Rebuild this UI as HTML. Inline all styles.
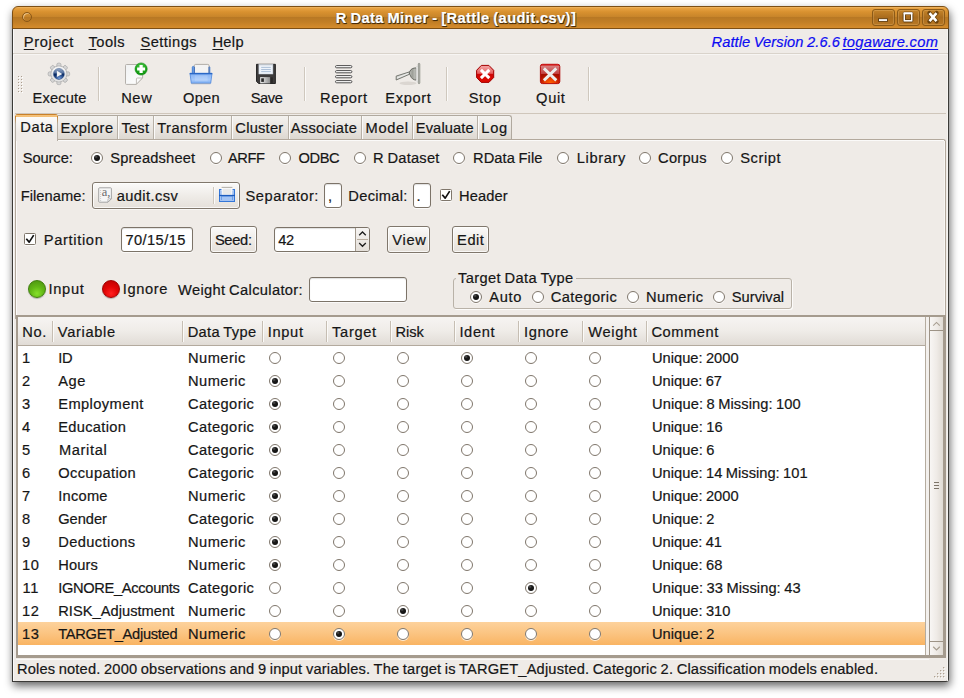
<!DOCTYPE html>
<html>
<head>
<meta charset="utf-8">
<title>R Data Miner - [Rattle (audit.csv)]</title>
<style>
html,body{margin:0;padding:0;background:#fff;}
body{width:964px;height:698px;position:relative;overflow:hidden;font-family:"Liberation Sans",sans-serif;font-size:14.67px;color:#161616;}
div,span,i,b{box-sizing:border-box;}
.a{position:absolute;}
.t{position:absolute;white-space:pre;word-spacing:-0.7px;line-height:20px;height:20px;-webkit-text-stroke:0.2px currentColor;}
.t u{text-decoration:underline;text-underline-offset:2px;text-decoration-thickness:1px;}
/* radio */
i.r{position:absolute;width:12px;height:12px;border-radius:50%;border:1px solid #7f766b;background:#fff;box-shadow:0 1px 0 rgba(255,255,255,.7);}
i.r.on::after{content:"";position:absolute;left:2px;top:2px;width:6px;height:6px;border-radius:50%;background:radial-gradient(circle at 35% 30%,#5a5a5a 0,#1a1a1a 30%,#0c0c0c 100%);}
/* generic gtk button */
.btn{position:absolute;border:1px solid #80776c;border-radius:3px;background:linear-gradient(#fbfaf9 0%,#efece8 50%,#e5e0da 100%);box-shadow:inset 0 0 0 1px rgba(255,255,255,.75),0 1px 0 rgba(255,255,255,.6);}
.entry{position:absolute;border:1px solid #7c7368;border-radius:3px;background:#fff;box-shadow:inset 0 1px 1px rgba(0,0,0,.13),0 1px 0 rgba(255,255,255,.7);}
.vsep{position:absolute;width:1px;background:#cfc8be;box-shadow:1px 0 0 #fbfaf9;}
.chk{position:absolute;width:12px;height:12px;border:1px solid #7f766b;background:#fff;border-radius:1.5px;box-shadow:0 1px 0 rgba(255,255,255,.7);}
.hsep{position:absolute;width:1px;top:321px;height:21px;background:#c6beb3;box-shadow:1px 0 0 #fbfaf8;}
</style>
</head>
<body>
<!-- window shadow + frame -->
<div class="a" id="win" style="left:12px;top:6px;width:937px;height:676px;background:#efebe7;border-radius:6px 6px 3px 1px;box-shadow:1px 4px 9px 0px rgba(0,0,0,.6);"></div>
<div class="a" style="left:12px;top:28px;width:937px;height:654px;border:1px solid #3b3a37;border-top:none;border-radius:0 0 3px 0;"></div>
<div class="a" style="left:13px;top:29px;width:1px;height:652px;background:#fbfaf9;"></div>
<div class="a" style="left:947px;top:29px;width:1px;height:652px;background:#f6f4f1;"></div>
<!-- titlebar -->
<div class="a" id="title" style="left:12px;top:6px;width:937px;height:23px;border:1px solid #7d4f14;border-radius:6px 6px 0 0;background:linear-gradient(#f0b866 0px,#e6a040 1.5px,#d8912f 5px,#c7842a 10px,#b87824 10.5px,#c17e25 15px,#d58c2c 21px);"></div>
<div class="a" style="left:22px;top:12px;width:10px;height:10px;border-radius:50%;border:1px solid #8a5716;box-shadow:inset 1px 1px 0 rgba(255,230,190,.6);"></div>
<!-- title buttons -->
<div class="a tb" style="left:872px;top:9px;width:23px;height:17px;border:1px solid #8c5a17;border-radius:3px;background:linear-gradient(#c58429,#a96c1e 50%,#b87824);box-shadow:inset 0 0 0 1px rgba(255,220,160,.22);"></div>
<div class="a tb" style="left:897px;top:9px;width:23px;height:17px;border:1px solid #8c5a17;border-radius:3px;background:linear-gradient(#c58429,#a96c1e 50%,#b87824);box-shadow:inset 0 0 0 1px rgba(255,220,160,.22);"></div>
<div class="a tb" style="left:922px;top:9px;width:23px;height:17px;border:1px solid #8c5a17;border-radius:3px;background:linear-gradient(#c58429,#a96c1e 50%,#b87824);box-shadow:inset 0 0 0 1px rgba(255,220,160,.22);"></div>
<svg class="a" style="left:872px;top:9px" width="73" height="17" viewBox="0 0 73 17">
 <rect x="6.5" y="9.7" width="9" height="2.7" fill="#fff" stroke="#5e3a0a" stroke-width=".9"/>
 <rect x="32.3" y="4.4" width="7.4" height="7.4" fill="none" stroke="#5e3a0a" stroke-width="3.2" stroke-linejoin="round"/>
 <rect x="32.3" y="4.4" width="7.4" height="7.4" fill="none" stroke="#fff" stroke-width="1.5"/>
 <path d="M31.6 4.3 H40.4" stroke="#fff" stroke-width="2"/>
 <path d="M57.4 4.1 L64.6 12.3 M64.6 4.1 L57.4 12.3" stroke="#5e3a0a" stroke-width="4.2" stroke-linecap="round" opacity=".85"/>
 <path d="M57.5 4.2 L64.5 12.2 M64.5 4.2 L57.5 12.2" stroke="#fff" stroke-width="2.6" stroke-linecap="butt"/>
</svg>
<!-- menubar bottom line -->
<div class="a" style="left:13px;top:53px;width:935px;height:1px;background:#d9d3cb;"></div>
<div class="a" style="left:13px;top:54px;width:935px;height:1px;background:#f7f5f3;"></div>
<!-- toolbar -->
<div class="a" style="left:15px;top:113px;width:931px;height:1px;background:#cfc6bb;"></div>
<svg class="a" style="left:17px;top:75px" width="7" height="19" viewBox="0 0 7 19"><g fill="#fff"><rect x="2" y="2" width="1" height="1"/><rect x="5" y="2" width="1" height="1"/><rect x="2" y="5" width="1" height="1"/><rect x="5" y="5" width="1" height="1"/><rect x="2" y="8" width="1" height="1"/><rect x="5" y="8" width="1" height="1"/><rect x="2" y="11" width="1" height="1"/><rect x="5" y="11" width="1" height="1"/><rect x="2" y="14" width="1" height="1"/><rect x="5" y="14" width="1" height="1"/><rect x="2" y="17" width="1" height="1"/><rect x="5" y="17" width="1" height="1"/></g><g fill="#ab9d8e"><rect x="1" y="1" width="1" height="1"/><rect x="4" y="1" width="1" height="1"/><rect x="1" y="4" width="1" height="1"/><rect x="4" y="4" width="1" height="1"/><rect x="1" y="7" width="1" height="1"/><rect x="4" y="7" width="1" height="1"/><rect x="1" y="10" width="1" height="1"/><rect x="4" y="10" width="1" height="1"/><rect x="1" y="13" width="1" height="1"/><rect x="4" y="13" width="1" height="1"/><rect x="1" y="16" width="1" height="1"/><rect x="4" y="16" width="1" height="1"/></g></svg>
<div class="vsep" style="left:98px;top:67px;height:34px;"></div>
<div class="vsep" style="left:304px;top:67px;height:34px;"></div>
<div class="vsep" style="left:446px;top:67px;height:34px;"></div>
<div class="vsep" style="left:588px;top:67px;height:34px;"></div>
<svg class="a" style="left:0;top:0" width="964" height="698" viewBox="0 0 964 698">
<defs>
 <linearGradient id="gBlue" x1="0" y1="0" x2="0" y2="1"><stop offset="0" stop-color="#93a6c3"/><stop offset=".42" stop-color="#53709f"/><stop offset=".5" stop-color="#0a2a63"/><stop offset="1" stop-color="#0f3577"/></linearGradient>
 <radialGradient id="gBlueGlow" cx=".55" cy=".95" r=".5"><stop offset="0" stop-color="#8db8f5" stop-opacity=".8"/><stop offset="1" stop-color="#8db8f5" stop-opacity="0"/></radialGradient>
 <linearGradient id="gPage" x1="0" y1="0" x2="1" y2="1"><stop offset="0" stop-color="#f0f1f2"/><stop offset="1" stop-color="#ffffff"/></linearGradient>
 <radialGradient id="gGreen" cx=".5" cy=".3" r=".75"><stop offset="0" stop-color="#4fc94a"/><stop offset=".6" stop-color="#1aa51a"/><stop offset="1" stop-color="#0a8a0c"/></radialGradient>
 <linearGradient id="gFold" x1="0" y1="0" x2="0" y2="1"><stop offset="0" stop-color="#5d97ea"/><stop offset=".12" stop-color="#8ab6f5"/><stop offset=".65" stop-color="#a6c9fb"/><stop offset="1" stop-color="#78abf1"/></linearGradient>
 <linearGradient id="gShut" x1="0" y1="0" x2="1" y2="0"><stop offset="0" stop-color="#f0f0f0"/><stop offset="1" stop-color="#8e8e8e"/></linearGradient>
 <linearGradient id="gStop" x1="0" y1="0" x2="0" y2="1"><stop offset="0" stop-color="#f29a9a"/><stop offset=".48" stop-color="#e23a3a"/><stop offset=".52" stop-color="#cf0606"/><stop offset="1" stop-color="#e00b00"/></linearGradient>
 <linearGradient id="gQuit" x1="0" y1="0" x2="0" y2="1"><stop offset="0" stop-color="#dc8f8f"/><stop offset=".48" stop-color="#c24040"/><stop offset=".52" stop-color="#a50e00"/><stop offset="1" stop-color="#b81200"/></linearGradient>
 <radialGradient id="gQuitGlow" cx=".5" cy=".95" r=".62" gradientTransform="translate(.5 .95) scale(1 1.5) translate(-.5 -.95)"><stop offset="0" stop-color="#ff6200"/><stop offset=".45" stop-color="#f24800" stop-opacity=".85"/><stop offset="1" stop-color="#e03000" stop-opacity="0"/></radialGradient>
 <linearGradient id="gCone" x1="0" y1="0" x2="1" y2="0"><stop offset="0" stop-color="#c4c5c0"/><stop offset=".45" stop-color="#9c9e97"/><stop offset="1" stop-color="#c9cac5"/></linearGradient>
</defs>
<!-- Execute: gear -->
<g transform="translate(58.9 73.9)">
 <g fill="#d6d6d6" stroke="#b2b2b2" stroke-width=".9">
  <rect x="-2" y="-10.7" width="4" height="6" rx="1.3"/>
  <rect x="-2" y="-10.7" width="4" height="6" rx="1.3" transform="rotate(45)"/>
  <rect x="-2" y="-10.7" width="4" height="6" rx="1.3" transform="rotate(90)"/>
  <rect x="-2" y="-10.7" width="4" height="6" rx="1.3" transform="rotate(135)"/>
  <rect x="-2" y="-10.7" width="4" height="6" rx="1.3" transform="rotate(180)"/>
  <rect x="-2" y="-10.7" width="4" height="6" rx="1.3" transform="rotate(225)"/>
  <rect x="-2" y="-10.7" width="4" height="6" rx="1.3" transform="rotate(270)"/>
  <rect x="-2" y="-10.7" width="4" height="6" rx="1.3" transform="rotate(315)"/>
  <circle r="8"/>
 </g>
 <circle r="7.5" fill="#e4e4e4"/>
 <path d="M-6.8 -2 A7.1 7.1 0 0 1 6.8 -2 L5 1 L-5 1Z" fill="#f3f3f3"/>
 <circle r="5.5" fill="url(#gBlue)" stroke="#3d5a8c" stroke-width=".5"/>
 <circle r="5.2" fill="url(#gBlueGlow)"/>
 <path d="M-2 -3.2 L3.4 0 L-2 3.2Z" fill="#f4f4f4"/>
</g>
<!-- New -->
<g>
 <path d="M126.5 64.5 H141.6 Q142.6 64.5 142.6 65.5 V78 L136.2 84.4 H126.5 Q125.5 84.4 125.5 83.4 V65.5 Q125.5 64.5 126.5 64.5Z" fill="url(#gPage)" stroke="#b4b0ab" stroke-width="1"/>
 <path d="M136.4 84.2 V79 Q136.4 78 137.4 78 H142.4Z" fill="#fbfbfb" stroke="#b9b5b0" stroke-width=".9"/>
 <circle cx="141.1" cy="69" r="6.1" fill="url(#gGreen)" stroke="#0b8a0e" stroke-width=".6"/>
 <path d="M141.1 65 V73 M137.1 69 H145.1" stroke="#fff" stroke-width="3.2"/>
</g>
<!-- Open -->
<g>
 <rect x="192.3" y="66.4" width="17.5" height="8" rx="1" fill="#6a9fe9" stroke="#3a79d2" stroke-width=".9"/>
 <rect x="194.4" y="64.4" width="14.6" height="10" rx="1.2" fill="#f3f3f3" stroke="#aaa59e" stroke-width=".9"/>
 <path d="M194.4 67 V73 M209 67 V73" stroke="#3468bd" stroke-width=".9"/>
 <path d="M190 73.4 H212 L210.7 83.3 H191.3Z" fill="url(#gFold)" stroke="#4b87de" stroke-width=".8"/>
 <rect x="194.8" y="75.4" width="12.8" height="5.8" fill="#fff" opacity=".16"/>
 <path d="M189.7 73.6 H212.3" stroke="#2a68c6" stroke-width="1.4"/>
 <path d="M191.6 83.8 H210.4" stroke="#9fa6b2" stroke-width=".9" opacity=".7"/>
</g>
<!-- Save -->
<g>
 <path d="M256.5 64.3 H275.4 V83.5 H258.6 L256.5 81.4Z" fill="#3d3b3b" stroke="#1c1c1c" stroke-width=".9"/>
 <rect x="258.9" y="64.4" width="14" height="9.6" fill="#eef3fa" stroke="#c9d3df" stroke-width=".5"/>
 <path d="M258.9 64.8 H272.9" stroke="#bfc3c8" stroke-width=".9"/>
 <path d="M261.2 67.4 H270.8 M261.2 69.5 H270.8 M261.2 71.6 H270.8" stroke="#a5bad4" stroke-width=".9"/>
 <rect x="260.2" y="77.1" width="9.9" height="6.3" fill="url(#gShut)"/>
 <rect x="261.2" y="78.3" width="2.7" height="3.6" fill="#2c2c2c"/>
 <rect x="270.6" y="77.4" width="2.2" height="5.5" fill="#2a2828"/>
</g>
<!-- Report -->
<g fill="#fff" stroke="#4e4e4e" stroke-width="1">
 <rect x="335.5" y="65.6" width="16.4" height="2.2" rx="1.1"/>
 <rect x="335.5" y="70.6" width="16.4" height="2.2" rx="1.1"/>
 <rect x="335.5" y="75.6" width="16.4" height="2.2" rx="1.1"/>
 <rect x="335.5" y="80.6" width="16.4" height="2.2" rx="1.1"/>
</g>
<!-- Export (plug) -->
<g>
 <ellipse cx="408" cy="83.2" rx="8.5" ry="1.7" fill="#aaa39a" opacity=".28"/>
 <path d="M409.4 71.9 L396.2 76.1 V80 L409.8 74.1Z" fill="#d3d4d0" stroke="#6b6d67" stroke-width=".9"/>
 <path d="M397 78 L409 73.1" stroke="#f1f1ef" stroke-width=".9"/>
 <path d="M416.3 67.9 C413 67.9 410.8 69 410 71.2 C409.8 71.8 409.5 72 409 72 L409.5 74.1 C410 74.2 410.2 74.8 410.5 75.8 C411.3 78.4 413.4 80 416.3 80.1Z" fill="url(#gCone)" stroke="#5a5c57" stroke-width=".9"/>
 <rect x="416.3" y="66.2" width="1.8" height="15.6" fill="#f6f6f4" stroke="#d4d5d1" stroke-width=".4"/>
 <rect x="418.3" y="63.3" width="1.5" height="20.4" rx=".7" fill="#c9cac5" stroke="#84867f" stroke-width=".8"/>
</g>
<!-- Stop -->
<g>
 <path d="M481.3 65.4 H488.9 L493.7 70.3 V77.5 L488.9 82.4 H481.3 L476.6 77.5 V70.3Z" fill="url(#gStop)" stroke="#a30000" stroke-width="1" stroke-linejoin="round"/>
 <path d="M481.5 66.2 H488.6 L492.9 70.5 V73.6 H477.3 V70.5Z" fill="#fff" opacity=".18"/>
 <path d="M480.9 69.9 L489.3 78.1 M489.3 69.9 L480.9 78.1" stroke="#fff" stroke-width="3"/>
</g>
<!-- Quit -->
<g>
 <rect x="540.4" y="64.3" width="19.4" height="19.3" rx="2.2" fill="url(#gQuit)" stroke="#b30808" stroke-width="1"/>
 <rect x="541" y="73.8" width="18.2" height="9.3" fill="url(#gQuitGlow)"/>
 <path d="M540.9 65 H559.3" stroke="#d61212" stroke-width="1.1"/>
 <path d="M543.9 68.4 L556.3 80.4 M556.3 68.4 L543.9 80.4" stroke="#ececec" stroke-width="2.9"/>
</g>
</svg>

<!-- notebook -->
<div class="a" style="left:15px;top:139px;width:931px;height:180px;border:1px solid #b3a99d;border-bottom:none;border-radius:0 3px 0 0;"></div>
<div class="a" style="left:16px;top:140px;width:928px;height:1px;background:#fbfaf9;"></div>
<div class="a" style="left:944px;top:141px;width:1px;height:174px;background:#f7f5f3;"></div>
<div class="a" style="left:16px;top:140px;width:1px;height:175px;background:#fbfaf9;"></div>
<!-- inactive tabs -->
<div class="a" id="tabs" style="left:57px;top:115px;width:455px;height:24px;border:1px solid #b0a99f;border-bottom:none;border-radius:0 3px 0 0;background:linear-gradient(#f4f2ef,#e9e5e0 55%,#ddd8d1);"></div>
<div class="vsep" style="left:117px;top:116px;height:23px;background:#b7b0a6;"></div>
<div class="vsep" style="left:153px;top:116px;height:23px;background:#b7b0a6;"></div>
<div class="vsep" style="left:231px;top:116px;height:23px;background:#b7b0a6;"></div>
<div class="vsep" style="left:288px;top:116px;height:23px;background:#b7b0a6;"></div>
<div class="vsep" style="left:361px;top:116px;height:23px;background:#b7b0a6;"></div>
<div class="vsep" style="left:412px;top:116px;height:23px;background:#b7b0a6;"></div>
<div class="vsep" style="left:477px;top:116px;height:23px;background:#b7b0a6;"></div>
<!-- active tab -->
<div class="a" style="left:15px;top:114px;width:43px;height:27px;border:1px solid #b5aea4;border-bottom:none;border-radius:3px 3px 0 0;background:linear-gradient(#fbfaf9 3px,#efebe7 18px);"></div>
<div class="a" style="left:15px;top:114px;width:43px;height:3px;border-radius:3px 3px 0 0;background:linear-gradient(#c8802a 0,#c8802a 1px,#f6c47e 1px,#f3bd73 3px);"></div>
<div class="a" style="left:15px;top:116px;width:1px;height:8px;background:linear-gradient(#c8802a,#b5aea4);"></div>
<div class="a" style="left:57px;top:116px;width:1px;height:8px;background:linear-gradient(#c8802a,#b5aea4);"></div>
<!-- filename button -->
<div class="btn" style="left:92px;top:182px;width:148px;height:27px;"></div>
<div class="vsep" style="left:213px;top:187px;height:17px;"></div>
<svg class="a" style="left:92px;top:182px" width="148" height="27" viewBox="92 182 148 27">
 <path d="M99.5 187.8 H110.6 Q111.4 187.8 111.4 188.6 V198.8 L108 202.2 H99.5 Q98.7 202.2 98.7 201.4 V188.6 Q98.7 187.8 99.5 187.8Z" fill="#f6f6f6" stroke="#9c9c9c" stroke-width=".9"/>
 <path d="M108 202 V199.6 Q108 198.8 108.8 198.8 H111.2Z" fill="#fff" stroke="#9c9c9c" stroke-width=".7"/>
 <path d="M100.6 190 v.9 M100.6 192 v.9 M100.6 194 v.9 M100.6 196 v.9 M100.6 198 v.9 M100.6 200 v.9" stroke="#c2c2c2" stroke-width=".9"/>
 <text x="101.7" y="196.3" font-family="Liberation Serif, serif" font-size="12.5" fill="#6a6a6a">a,</text>
 <!-- small open icon -->
 <rect x="219.5" y="189.5" width="15" height="12" fill="#6d9fe8" stroke="#3577d8" stroke-width="1"/>
 <rect x="220.5" y="190.5" width="13" height="10" fill="none" stroke="#a9c6f3" stroke-width=".9"/>
 <rect x="222.1" y="188.1" width="9.8" height="7" fill="#e9e9e9" stroke="#fdfdfd" stroke-width="1.2"/>
 <path d="M221.6 187.4 H232.4" stroke="#aaa69f" stroke-width=".9"/>
 <path d="M219 195.5 H235" stroke="#1c5bbd" stroke-width="1.3"/>
 <rect x="222" y="196.8" width="10" height="3.2" fill="#a4c4f4"/>
</svg>

<div class="entry" style="left:324px;top:183px;width:18px;height:25px;"></div>
<div class="entry" style="left:413px;top:183px;width:18px;height:25px;"></div>
<div class="chk" style="left:440px;top:189px;"></div>
<svg class="a" style="left:440px;top:189px" width="12" height="12" viewBox="0 0 12 12"><path d="M2.3 5.7 L5.2 9.1 L9.7 2.1" fill="none" stroke="#111" stroke-width="1.7" stroke-linejoin="round"/></svg>
<!-- partition row -->
<div class="chk" style="left:24px;top:233px;"></div>
<svg class="a" style="left:24px;top:233px" width="12" height="12" viewBox="0 0 12 12"><path d="M2.3 5.7 L5.2 9.1 L9.7 2.1" fill="none" stroke="#111" stroke-width="1.7" stroke-linejoin="round"/></svg>
<div class="entry" style="left:121px;top:227px;width:72px;height:25px;"></div>
<div class="btn" style="left:210px;top:226px;width:47px;height:27px;"></div>
<div class="entry" style="left:274px;top:227px;width:96px;height:25px;"></div>
<div class="a" style="left:355px;top:228px;width:14px;height:23px;border-left:1px solid #a39a8e;background:linear-gradient(#f6f4f2,#e4dfd9);border-radius:0 2px 2px 0;"></div>
<div class="a" style="left:357px;top:239px;width:11px;height:1px;background:#b9ad9f;"></div>
<svg class="a" style="left:356px;top:228px" width="13" height="23" viewBox="0 0 13 23"><path d="M3.2 7.3 L6.5 4 L9.8 7.3" fill="none" stroke="#1c1c1c" stroke-width="1.3"/><path d="M3.2 15 L6.5 18.3 L9.8 15" fill="none" stroke="#1c1c1c" stroke-width="1.3"/></svg>
<div class="btn" style="left:387px;top:226px;width:43px;height:27px;"></div>
<div class="btn" style="left:452px;top:226px;width:37px;height:27px;"></div>
<!-- input/ignore row -->
<div class="a" style="left:28px;top:280px;width:18px;height:18px;border-radius:50%;border:1px solid #3f7f0c;background:radial-gradient(circle at 50% 78%,#86e02a 0,#62b716 45%,#4a9010 100%);box-shadow:0 1px 1px rgba(0,0,0,.25);"></div>
<div class="a" style="left:102px;top:280px;width:18px;height:18px;border-radius:50%;border:1px solid #a00000;background:radial-gradient(circle at 50% 78%,#ff2222 0,#e20505 45%,#b80000 100%);box-shadow:0 1px 1px rgba(0,0,0,.25);"></div>
<div class="entry" style="left:309px;top:277px;width:98px;height:25px;"></div>
<div class="a" style="left:453px;top:278px;width:339px;height:31px;border:1px solid #b9b2a8;border-radius:3px;box-shadow:inset 1px 1px 0 rgba(255,255,255,.0),1px 1px 0 rgba(255,255,255,.8);"></div>
<!-- table -->
<div class="a" style="left:16px;top:315px;width:930px;height:343px;background:#a59b8e;"></div>
<div class="a" style="left:16px;top:659px;width:913px;height:1px;background:#faf9f8;"></div>
<div class="a" style="left:18px;top:317px;width:907px;height:338px;background:#fff;"></div>
<div class="a" style="left:18px;top:317px;width:907px;height:29px;background:linear-gradient(#f6f4f2,#efece8 50%,#e1dcd6);border-bottom:1px solid #b3aa9e;"></div>
<div class="hsep" style="left:52px;"></div>
<div class="hsep" style="left:182px;"></div>
<div class="hsep" style="left:262px;"></div>
<div class="hsep" style="left:326px;"></div>
<div class="hsep" style="left:390px;"></div>
<div class="hsep" style="left:454px;"></div>
<div class="hsep" style="left:518px;"></div>
<div class="hsep" style="left:582px;"></div>
<div class="hsep" style="left:646px;"></div>
<!-- selected row -->
<div class="a" style="left:18px;top:622px;width:907px;height:23px;background:linear-gradient(#fdd29c,#fbc481 50%,#f9b463);"></div>
<!-- scrollbar -->
<div class="a" style="left:925px;top:317px;width:18px;height:338px;background:#f3f0ed;border-left:1px solid #b5ac9f;"></div>
<div class="a" style="left:929px;top:317px;width:14px;height:338px;border-left:1px solid #9d9386;background:linear-gradient(90deg,#f8f6f4,#efebe7 50%,#e0dbd4);"></div>
<div class="a" style="left:930px;top:330px;width:13px;height:1px;background:#9d9386;"></div>
<div class="a" style="left:930px;top:641px;width:13px;height:1px;background:#9d9386;"></div>
<svg class="a" style="left:930px;top:317px" width="13" height="338" viewBox="0 0 13 338">
 <path d="M3.2 8.6 L6.5 5.4 L9.8 8.6" fill="none" stroke="#a89e91" stroke-width="1.1"/>
 <path d="M3.2 329.8 L6.5 333 L9.8 329.8" fill="none" stroke="#a89e91" stroke-width="1.2"/>
 <path d="M4 165.5h5M4 168.5h5M4 171.5h5" stroke="#7d7468" stroke-width="1"/>
</svg>
<!-- resize grip -->
<svg class="a" style="left:933px;top:666px" width="13" height="13" viewBox="0 0 13 13"><g fill="#fff"><rect x="11" y="2" width="1.2" height="1.2"/><rect x="8" y="5" width="1.2" height="1.2"/><rect x="11" y="5" width="1.2" height="1.2"/><rect x="5" y="8" width="1.2" height="1.2"/><rect x="8" y="8" width="1.2" height="1.2"/><rect x="11" y="8" width="1.2" height="1.2"/><rect x="2" y="11" width="1.2" height="1.2"/><rect x="5" y="11" width="1.2" height="1.2"/><rect x="8" y="11" width="1.2" height="1.2"/><rect x="11" y="11" width="1.2" height="1.2"/></g><g fill="#b0a292"><rect x="10" y="1" width="1.3" height="1.3"/><rect x="7" y="4" width="1.3" height="1.3"/><rect x="10" y="4" width="1.3" height="1.3"/><rect x="4" y="7" width="1.3" height="1.3"/><rect x="7" y="7" width="1.3" height="1.3"/><rect x="10" y="7" width="1.3" height="1.3"/><rect x="1" y="10" width="1.3" height="1.3"/><rect x="4" y="10" width="1.3" height="1.3"/><rect x="7" y="10" width="1.3" height="1.3"/><rect x="10" y="10" width="1.3" height="1.3"/></g></svg>
<i class="r on" style="left:91.0px;top:152.0px"></i>
<i class="r" style="left:210.0px;top:152.0px"></i>
<i class="r" style="left:279.0px;top:152.0px"></i>
<i class="r" style="left:354.0px;top:152.0px"></i>
<i class="r" style="left:453.3px;top:152.0px"></i>
<i class="r" style="left:556.8px;top:152.0px"></i>
<i class="r" style="left:638.6px;top:152.0px"></i>
<i class="r" style="left:720.6px;top:152.0px"></i>
<i class="r on" style="left:469.5px;top:291.0px"></i>
<i class="r" style="left:531.8px;top:291.0px"></i>
<i class="r" style="left:627.0px;top:291.0px"></i>
<i class="r" style="left:713.0px;top:291.0px"></i>
<i class="r" style="left:268.6px;top:351.5px"></i>
<i class="r" style="left:332.6px;top:351.5px"></i>
<i class="r" style="left:396.6px;top:351.5px"></i>
<i class="r on" style="left:460.6px;top:351.5px"></i>
<i class="r" style="left:524.6px;top:351.5px"></i>
<i class="r" style="left:588.6px;top:351.5px"></i>
<i class="r on" style="left:268.6px;top:374.5px"></i>
<i class="r" style="left:332.6px;top:374.5px"></i>
<i class="r" style="left:396.6px;top:374.5px"></i>
<i class="r" style="left:460.6px;top:374.5px"></i>
<i class="r" style="left:524.6px;top:374.5px"></i>
<i class="r" style="left:588.6px;top:374.5px"></i>
<i class="r on" style="left:268.6px;top:397.5px"></i>
<i class="r" style="left:332.6px;top:397.5px"></i>
<i class="r" style="left:396.6px;top:397.5px"></i>
<i class="r" style="left:460.6px;top:397.5px"></i>
<i class="r" style="left:524.6px;top:397.5px"></i>
<i class="r" style="left:588.6px;top:397.5px"></i>
<i class="r on" style="left:268.6px;top:420.5px"></i>
<i class="r" style="left:332.6px;top:420.5px"></i>
<i class="r" style="left:396.6px;top:420.5px"></i>
<i class="r" style="left:460.6px;top:420.5px"></i>
<i class="r" style="left:524.6px;top:420.5px"></i>
<i class="r" style="left:588.6px;top:420.5px"></i>
<i class="r on" style="left:268.6px;top:443.5px"></i>
<i class="r" style="left:332.6px;top:443.5px"></i>
<i class="r" style="left:396.6px;top:443.5px"></i>
<i class="r" style="left:460.6px;top:443.5px"></i>
<i class="r" style="left:524.6px;top:443.5px"></i>
<i class="r" style="left:588.6px;top:443.5px"></i>
<i class="r on" style="left:268.6px;top:466.5px"></i>
<i class="r" style="left:332.6px;top:466.5px"></i>
<i class="r" style="left:396.6px;top:466.5px"></i>
<i class="r" style="left:460.6px;top:466.5px"></i>
<i class="r" style="left:524.6px;top:466.5px"></i>
<i class="r" style="left:588.6px;top:466.5px"></i>
<i class="r on" style="left:268.6px;top:489.5px"></i>
<i class="r" style="left:332.6px;top:489.5px"></i>
<i class="r" style="left:396.6px;top:489.5px"></i>
<i class="r" style="left:460.6px;top:489.5px"></i>
<i class="r" style="left:524.6px;top:489.5px"></i>
<i class="r" style="left:588.6px;top:489.5px"></i>
<i class="r on" style="left:268.6px;top:512.5px"></i>
<i class="r" style="left:332.6px;top:512.5px"></i>
<i class="r" style="left:396.6px;top:512.5px"></i>
<i class="r" style="left:460.6px;top:512.5px"></i>
<i class="r" style="left:524.6px;top:512.5px"></i>
<i class="r" style="left:588.6px;top:512.5px"></i>
<i class="r on" style="left:268.6px;top:535.5px"></i>
<i class="r" style="left:332.6px;top:535.5px"></i>
<i class="r" style="left:396.6px;top:535.5px"></i>
<i class="r" style="left:460.6px;top:535.5px"></i>
<i class="r" style="left:524.6px;top:535.5px"></i>
<i class="r" style="left:588.6px;top:535.5px"></i>
<i class="r on" style="left:268.6px;top:558.5px"></i>
<i class="r" style="left:332.6px;top:558.5px"></i>
<i class="r" style="left:396.6px;top:558.5px"></i>
<i class="r" style="left:460.6px;top:558.5px"></i>
<i class="r" style="left:524.6px;top:558.5px"></i>
<i class="r" style="left:588.6px;top:558.5px"></i>
<i class="r" style="left:268.6px;top:581.5px"></i>
<i class="r" style="left:332.6px;top:581.5px"></i>
<i class="r" style="left:396.6px;top:581.5px"></i>
<i class="r" style="left:460.6px;top:581.5px"></i>
<i class="r on" style="left:524.6px;top:581.5px"></i>
<i class="r" style="left:588.6px;top:581.5px"></i>
<i class="r" style="left:268.6px;top:604.5px"></i>
<i class="r" style="left:332.6px;top:604.5px"></i>
<i class="r on" style="left:396.6px;top:604.5px"></i>
<i class="r" style="left:460.6px;top:604.5px"></i>
<i class="r" style="left:524.6px;top:604.5px"></i>
<i class="r" style="left:588.6px;top:604.5px"></i>
<i class="r" style="left:268.6px;top:627.5px"></i>
<i class="r on" style="left:332.6px;top:627.5px"></i>
<i class="r" style="left:396.6px;top:627.5px"></i>
<i class="r" style="left:460.6px;top:627.5px"></i>
<i class="r" style="left:524.6px;top:627.5px"></i>
<i class="r" style="left:588.6px;top:627.5px"></i>
<span class="t" style="left:335.70px;top:7.80px;letter-spacing:0.386px;font-weight:bold;color:#fff;text-shadow:1px 1px 0 #4a2c08,0 1px 1px #4a2c08">R Data Miner - [Rattle (audit.csv)]</span>
<span class="t" style="left:23.79px;top:32.00px;letter-spacing:0.650px;"><u>P</u>roject</span>
<span class="t" style="left:88.50px;top:32.00px;letter-spacing:0.470px;"><u>T</u>ools</span>
<span class="t" style="left:140.40px;top:32.00px;letter-spacing:0.462px;"><u>S</u>ettings</span>
<span class="t" style="left:212.40px;top:32.00px;letter-spacing:0.348px;"><u>H</u>elp</span>
<span class="t" style="left:711.50px;top:31.60px;letter-spacing:0.090px;font-style:italic;color:#0c0cf2">Rattle Version 2.6.6</span>
<span class="t" style="left:842.40px;top:31.60px;letter-spacing:0.312px;font-style:italic;color:#0c0cf2"><u>togaware.com</u></span>
<span class="t" style="left:32.60px;top:87.60px;letter-spacing:0.122px;">Execute</span>
<span class="t" style="left:121.14px;top:87.60px;letter-spacing:0.650px;">New</span>
<span class="t" style="left:183.00px;top:87.60px;letter-spacing:0.247px;">Open</span>
<span class="t" style="left:250.70px;top:87.60px;letter-spacing:-0.435px;">Save</span>
<span class="t" style="left:320.00px;top:87.60px;letter-spacing:0.600px;">Report</span>
<span class="t" style="left:385.25px;top:87.60px;letter-spacing:0.650px;">Export</span>
<span class="t" style="left:468.70px;top:87.60px;letter-spacing:0.648px;">Stop</span>
<span class="t" style="left:536.08px;top:87.60px;letter-spacing:0.650px;">Quit</span>
<span class="t" style="left:20.20px;top:116.80px;letter-spacing:0.610px;">Data</span>
<span class="t" style="left:60.60px;top:117.80px;letter-spacing:0.466px;">Explore</span>
<span class="t" style="left:121.40px;top:117.80px;letter-spacing:0.236px;">Test</span>
<span class="t" style="left:157.20px;top:117.80px;letter-spacing:0.471px;">Transform</span>
<span class="t" style="left:235.30px;top:117.80px;letter-spacing:0.244px;">Cluster</span>
<span class="t" style="left:290.70px;top:117.80px;letter-spacing:0.332px;">Associate</span>
<span class="t" style="left:365.59px;top:117.80px;letter-spacing:0.650px;">Model</span>
<span class="t" style="left:415.80px;top:117.80px;letter-spacing:0.108px;">Evaluate</span>
<span class="t" style="left:481.37px;top:117.80px;letter-spacing:0.650px;">Log</span>
<span class="t" style="left:22.70px;top:147.80px;letter-spacing:-0.069px;">Source:</span>
<span class="t" style="left:110.20px;top:147.80px;letter-spacing:0.188px;">Spreadsheet</span>
<span class="t" style="left:228.04px;top:147.80px;letter-spacing:-0.450px;">ARFF</span>
<span class="t" style="left:298.60px;top:147.80px;letter-spacing:-0.450px;">ODBC</span>
<span class="t" style="left:373.00px;top:147.80px;letter-spacing:0.241px;">R Dataset</span>
<span class="t" style="left:473.00px;top:147.80px;letter-spacing:0.097px;">RData File</span>
<span class="t" style="left:576.69px;top:147.80px;letter-spacing:0.650px;">Library</span>
<span class="t" style="left:658.10px;top:147.80px;letter-spacing:0.250px;">Corpus</span>
<span class="t" style="left:740.20px;top:147.80px;letter-spacing:0.586px;">Script</span>
<span class="t" style="left:20.70px;top:185.60px;letter-spacing:0.068px;">Filename:</span>
<span class="t" style="left:116.70px;top:185.60px;letter-spacing:0.407px;">audit.csv</span>
<span class="t" style="left:245.60px;top:185.60px;letter-spacing:0.485px;">Separator:</span>
<span class="t" style="left:328.00px;top:185.60px;">,</span>
<span class="t" style="left:348.30px;top:185.60px;letter-spacing:0.298px;">Decimal:</span>
<span class="t" style="left:416.50px;top:185.60px;">.</span>
<span class="t" style="left:459.10px;top:185.60px;letter-spacing:0.084px;">Header</span>
<span class="t" style="left:43.86px;top:229.80px;letter-spacing:0.650px;">Partition</span>
<span class="t" style="left:125.40px;top:229.80px;letter-spacing:0.420px;">70/15/15</span>
<span class="t" style="left:214.90px;top:229.80px;letter-spacing:-0.303px;">Seed:</span>
<span class="t" style="left:278.22px;top:229.80px;letter-spacing:-0.450px;">42</span>
<span class="t" style="left:392.37px;top:229.80px;letter-spacing:0.650px;">View</span>
<span class="t" style="left:457.10px;top:229.80px;letter-spacing:0.511px;">Edit</span>
<span class="t" style="left:48.60px;top:279.00px;letter-spacing:0.648px;">Input</span>
<span class="t" style="left:122.70px;top:279.00px;letter-spacing:0.648px;">Ignore</span>
<span class="t" style="left:178.00px;top:279.80px;letter-spacing:0.342px;">Weight Calculator:</span>
<span class="t" style="left:458.10px;top:267.60px;letter-spacing:0.343px;background:#efebe7;padding:0 2px;margin-left:-2px">Target Data Type</span>
<span class="t" style="left:489.30px;top:286.60px;letter-spacing:0.650px;">Auto</span>
<span class="t" style="left:550.70px;top:286.60px;letter-spacing:0.433px;">Categoric</span>
<span class="t" style="left:645.90px;top:286.60px;letter-spacing:0.440px;">Numeric</span>
<span class="t" style="left:731.80px;top:286.60px;letter-spacing:0.023px;">Survival</span>
<span class="t" style="left:22.34px;top:321.70px;letter-spacing:0.650px;">No.</span>
<span class="t" style="left:57.83px;top:321.70px;letter-spacing:0.650px;">Variable</span>
<span class="t" style="left:187.70px;top:321.70px;letter-spacing:0.320px;">Data Type</span>
<span class="t" style="left:267.80px;top:321.70px;letter-spacing:0.650px;">Input</span>
<span class="t" style="left:332.11px;top:321.70px;letter-spacing:0.650px;">Target</span>
<span class="t" style="left:395.40px;top:321.70px;">Risk</span>
<span class="t" style="left:459.40px;top:321.70px;letter-spacing:0.648px;">Ident</span>
<span class="t" style="left:524.10px;top:321.70px;letter-spacing:0.547px;">Ignore</span>
<span class="t" style="left:588.30px;top:321.70px;letter-spacing:0.650px;">Weight</span>
<span class="t" style="left:651.40px;top:321.70px;letter-spacing:0.578px;">Comment</span>
<span class="t" style="left:22.00px;top:347.70px;">1</span>
<span class="t" style="left:58.20px;top:347.70px;letter-spacing:-0.156px;">ID</span>
<span class="t" style="left:188.00px;top:347.70px;letter-spacing:0.456px;">Numeric</span>
<span class="t" style="left:652.00px;top:347.70px;letter-spacing:0.009px;">Unique: 2000</span>
<span class="t" style="left:22.00px;top:370.70px;">2</span>
<span class="t" style="left:58.20px;top:370.70px;letter-spacing:0.511px;">Age</span>
<span class="t" style="left:188.00px;top:370.70px;letter-spacing:0.456px;">Numeric</span>
<span class="t" style="left:652.00px;top:370.70px;letter-spacing:-0.023px;">Unique: 67</span>
<span class="t" style="left:22.00px;top:393.70px;">3</span>
<span class="t" style="left:58.20px;top:393.70px;letter-spacing:0.415px;">Employment</span>
<span class="t" style="left:188.00px;top:393.70px;letter-spacing:0.396px;">Categoric</span>
<span class="t" style="left:652.00px;top:393.70px;letter-spacing:0.081px;">Unique: 8 Missing: 100</span>
<span class="t" style="left:22.00px;top:416.70px;">4</span>
<span class="t" style="left:58.20px;top:416.70px;letter-spacing:0.302px;">Education</span>
<span class="t" style="left:188.00px;top:416.70px;letter-spacing:0.396px;">Categoric</span>
<span class="t" style="left:652.00px;top:416.70px;letter-spacing:0.044px;">Unique: 16</span>
<span class="t" style="left:22.00px;top:439.70px;">5</span>
<span class="t" style="left:58.91px;top:439.70px;letter-spacing:0.650px;">Marital</span>
<span class="t" style="left:188.00px;top:439.70px;letter-spacing:0.396px;">Categoric</span>
<span class="t" style="left:652.00px;top:439.70px;letter-spacing:0.032px;">Unique: 6</span>
<span class="t" style="left:22.00px;top:462.70px;">6</span>
<span class="t" style="left:58.20px;top:462.70px;letter-spacing:0.373px;">Occupation</span>
<span class="t" style="left:188.00px;top:462.70px;letter-spacing:0.396px;">Categoric</span>
<span class="t" style="left:652.00px;top:462.70px;letter-spacing:0.021px;">Unique: 14 Missing: 101</span>
<span class="t" style="left:22.00px;top:485.70px;">7</span>
<span class="t" style="left:58.20px;top:485.70px;letter-spacing:0.248px;">Income</span>
<span class="t" style="left:188.00px;top:485.70px;letter-spacing:0.456px;">Numeric</span>
<span class="t" style="left:652.00px;top:485.70px;letter-spacing:0.009px;">Unique: 2000</span>
<span class="t" style="left:22.00px;top:508.70px;">8</span>
<span class="t" style="left:58.20px;top:508.70px;letter-spacing:-0.038px;">Gender</span>
<span class="t" style="left:188.00px;top:508.70px;letter-spacing:0.396px;">Categoric</span>
<span class="t" style="left:652.00px;top:508.70px;letter-spacing:0.032px;">Unique: 2</span>
<span class="t" style="left:22.00px;top:531.70px;">9</span>
<span class="t" style="left:58.20px;top:531.70px;letter-spacing:0.397px;">Deductions</span>
<span class="t" style="left:188.00px;top:531.70px;letter-spacing:0.456px;">Numeric</span>
<span class="t" style="left:652.00px;top:531.70px;letter-spacing:-0.023px;">Unique: 41</span>
<span class="t" style="left:22.00px;top:554.70px;letter-spacing:0.487px;">10</span>
<span class="t" style="left:58.20px;top:554.70px;letter-spacing:0.148px;">Hours</span>
<span class="t" style="left:188.00px;top:554.70px;letter-spacing:0.456px;">Numeric</span>
<span class="t" style="left:652.00px;top:554.70px;letter-spacing:0.011px;">Unique: 68</span>
<span class="t" style="left:22.47px;top:577.70px;letter-spacing:0.650px;">11</span>
<span class="t" style="left:58.20px;top:577.70px;letter-spacing:-0.326px;">IGNORE_Accounts</span>
<span class="t" style="left:188.00px;top:577.70px;letter-spacing:0.396px;">Categoric</span>
<span class="t" style="left:652.00px;top:577.70px;letter-spacing:0.076px;">Unique: 33 Missing: 43</span>
<span class="t" style="left:22.00px;top:600.70px;letter-spacing:0.487px;">12</span>
<span class="t" style="left:58.20px;top:600.70px;letter-spacing:0.029px;">RISK_Adjustment</span>
<span class="t" style="left:188.00px;top:600.70px;letter-spacing:0.456px;">Numeric</span>
<span class="t" style="left:652.00px;top:600.70px;">Unique: 310</span>
<span class="t" style="left:22.00px;top:623.70px;letter-spacing:0.487px;">13</span>
<span class="t" style="left:58.20px;top:623.70px;letter-spacing:-0.296px;">TARGET_Adjusted</span>
<span class="t" style="left:188.00px;top:623.70px;letter-spacing:0.456px;">Numeric</span>
<span class="t" style="left:652.00px;top:623.70px;letter-spacing:0.032px;">Unique: 2</span>
<span class="t" style="left:16.90px;top:658.60px;letter-spacing:0.165px;">Roles noted. 2000 observations and 9 input variables. The target is TARGET_Adjusted. Categoric 2. Classification models enabled.</span>
</body>
</html>
